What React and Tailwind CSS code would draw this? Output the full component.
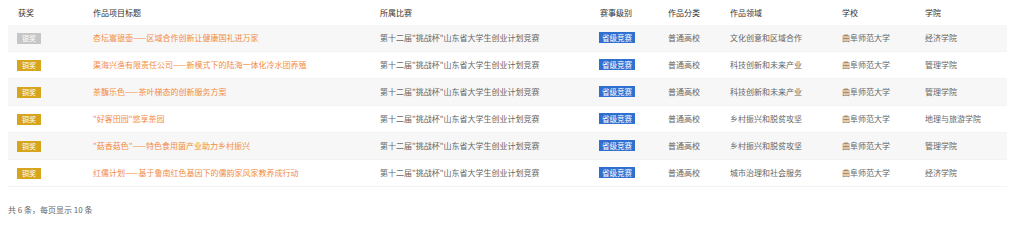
import React from 'react';

const cols = 'grid grid-cols-[75px_287px_220px_68px_62px_112px_83px_92px]';

const rows = [
  { award: '银奖', title: '杏坛嵩银壶——区域合作创新让健康国礼进万家', field: '文化创意和区域合作', college: '经济学院' },
  { award: '铜奖', title: '渠海兴渔有限责任公司——新模式下的陆海一体化冷水团养殖', field: '科技创新和未来产业', college: '管理学院' },
  { award: '铜奖', title: '茶馥乐色——茶叶梯态的创新服务方案', field: '科技创新和未来产业', college: '管理学院' },
  { award: '铜奖', title: '"好客田园"悠享茶园', field: '乡村振兴和脱贫攻坚', college: '地理与旅游学院' },
  { award: '铜奖', title: '"菇香菇色"——特色食用菌产业助力乡村振兴', field: '乡村振兴和脱贫攻坚', college: '管理学院' },
  { award: '铜奖', title: '红儒计划——基于鲁南红色基因下的儒韵家风家教养成行动', field: '城市治理和社会服务', college: '经济学院' },
];

const headers = ['获奖', '作品项目标题', '所属比赛', '赛事级别', '作品分类', '作品领域', '学校', '学院'];

export default function App() {
  return (
    <div className="w-[1024px] h-[242px] bg-white px-2 text-[8px] text-[#666] font-['Noto_Sans_CJK_SC','Noto_Sans',sans-serif]">
      <div className="w-[999px]">
        <div className={`${cols} h-[25px] items-center text-[#333]`}>
          {headers.map((h) => (
            <div key={h} className="pl-[10px]">{h}</div>
          ))}
        </div>
        {rows.map((r, i) => (
          <div
            key={i}
            className={`${cols} h-[27px] items-center border-b border-[#f3f3f3] ${i % 2 === 0 ? 'bg-[#f7f7f7]' : 'bg-white'}`}
          >
            <div className="pl-[9px]">
              <span
                className={`inline-block h-[11px] w-[24px] text-center leading-[11px] text-[7px] text-white ${
                  r.award === '银奖' ? 'bg-[#c6c6c6]' : 'bg-[#d6a51c]'
                }`}
              >
                {r.award}
              </span>
            </div>
            <div className="pl-[10px] text-[#f38b42] whitespace-nowrap">{r.title}</div>
            <div className="pl-[10px] whitespace-nowrap">第十二届"挑战杯"山东省大学生创业计划竞赛</div>
            <div className="pl-[9px]">
              <span className="inline-block h-[11px] px-[3px] leading-[11px] text-[7.5px] text-white bg-[#2f6fd0] whitespace-nowrap">
                省级竞赛
              </span>
            </div>
            <div className="pl-[10px]">普通高校</div>
            <div className="pl-[10px]">{r.field}</div>
            <div className="pl-[10px]">曲阜师范大学</div>
            <div className="pl-[10px]">{r.college}</div>
          </div>
        ))}
      </div>
      <div className="mt-[17px] text-[#666]">共 6 条，每页显示 10 条</div>
    </div>
  );
}
